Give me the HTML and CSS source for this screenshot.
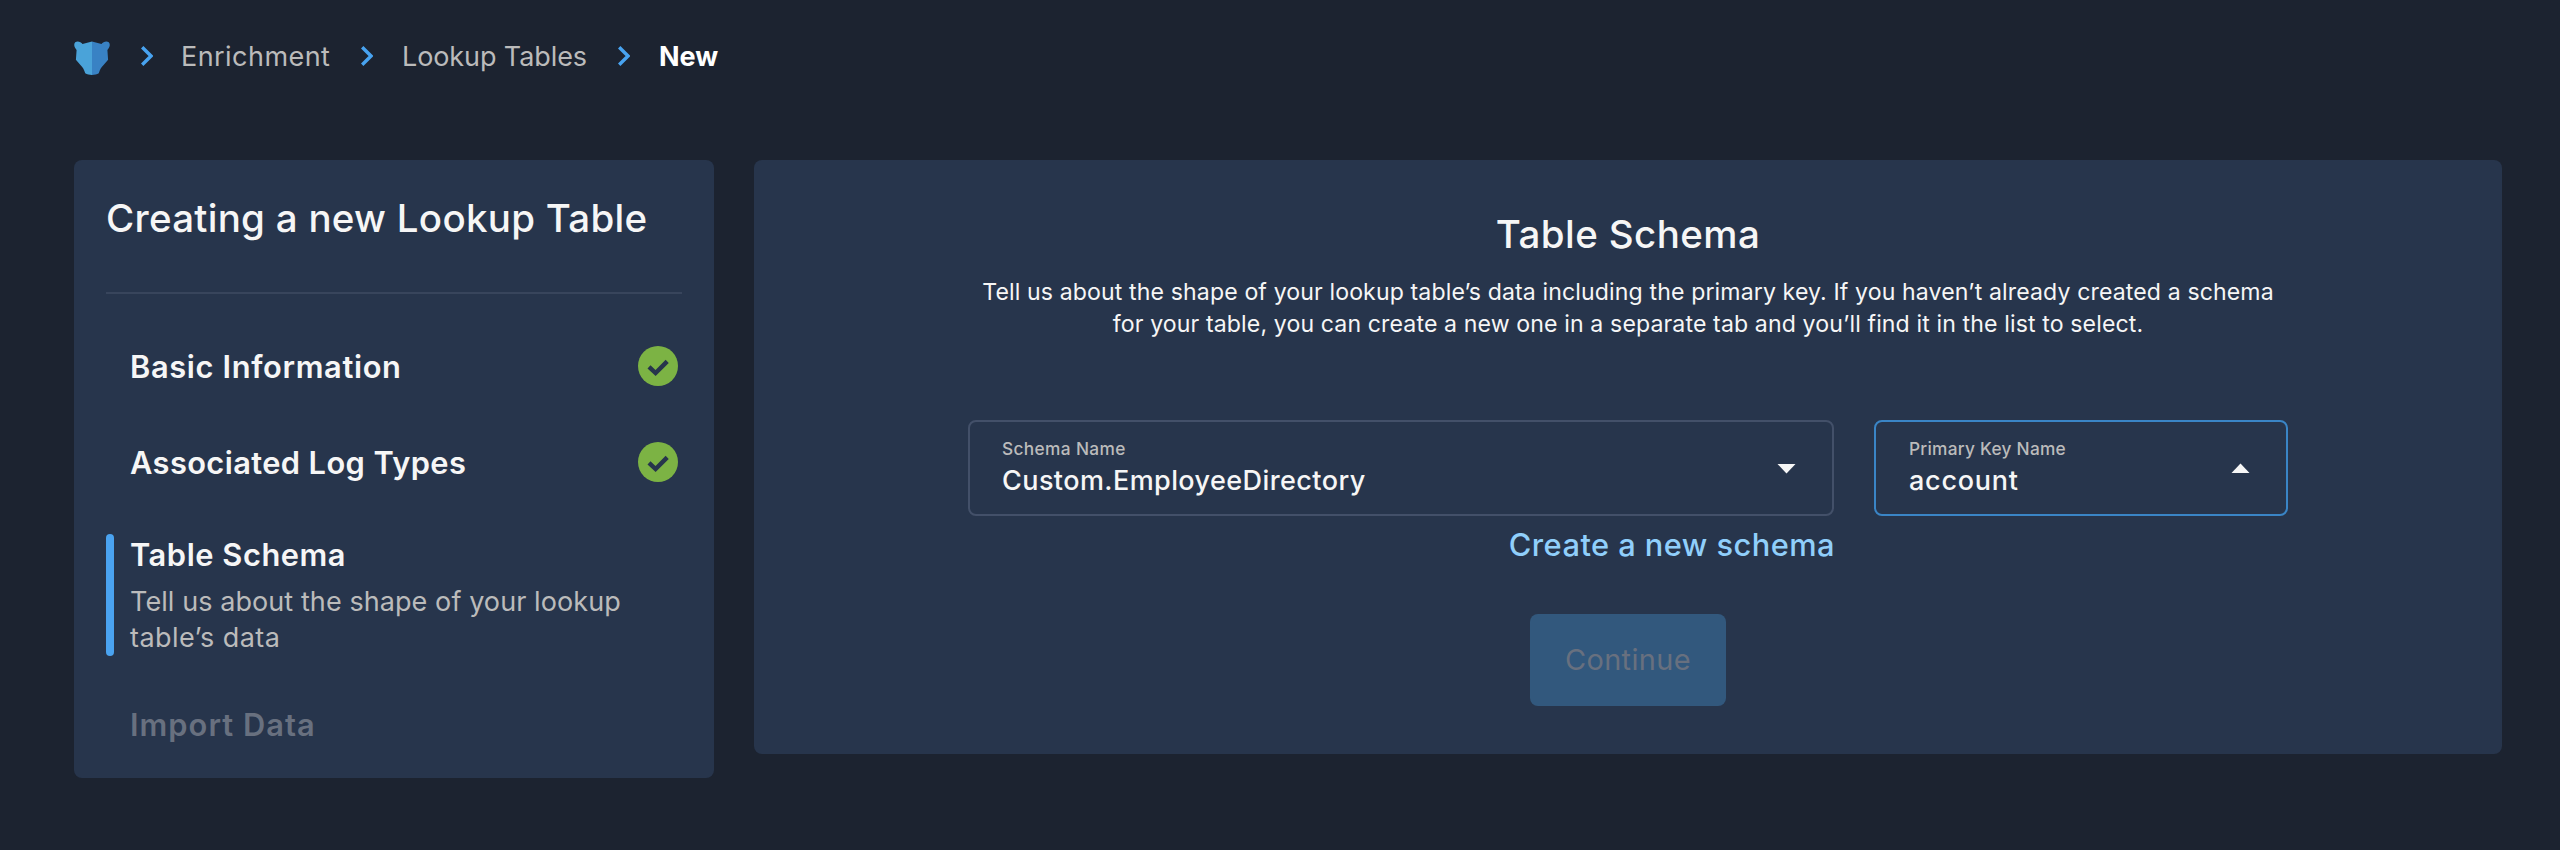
FILE: index.html
```html
<!DOCTYPE html>
<html lang="en">
<head>
<meta charset="utf-8">
<title>New Lookup Table</title>
<link rel="stylesheet" href="styles.css">
</head>
<body>
<nav class="breadcrumbs">
  <svg class="logo" width="36" height="34" viewBox="0 0 36 34">
    <path fill="#4aa3d9" d="M18 .4 L8.500 3 C7 .8 3.500-.3 1.200 1.200 C-.3 3 .1 5.300 1.200 7 L2.600 8.900 L1.900 18.800 L6.200 23.800 C8.500 25.800 10 28.500 11.200 32.200 C13 33.400 15.500 33.900 18 33.900Z"/>
    <path fill="#3982c4" d="M18 .4 L27.500 3 C29 .8 32.500-.3 34.800 1.200 C36.300 3 35.900 5.300 34.800 7 L33.400 8.900 L34.100 18.800 L29.800 23.800 C27.500 25.800 26 28.500 24.800 32.200 C23 33.400 20.500 33.900 18 33.900Z"/>
  </svg>
  <svg class="chevron chevron-first" width="12" height="20" viewBox="0 0 12 20"><path d="M1.200 1.200 10 10 1.200 18.800"/></svg>
  <a class="crumb crumb-section">Enrichment</a>
  <svg class="chevron" width="12" height="20" viewBox="0 0 12 20"><path d="M1.200 1.200 10 10 1.200 18.800"/></svg>
  <a class="crumb crumb-list">Lookup Tables</a>
  <svg class="chevron chevron-last" width="12" height="20" viewBox="0 0 12 20"><path d="M1.200 1.200 10 10 1.200 18.800"/></svg>
  <span class="crumb crumb-current">New</span>
</nav>
<main class="wizard">
  <aside class="card sidebar">
    <h1 class="sidebar-title">Creating a new Lookup Table</h1>
    <ol class="steps">
      <li class="step step-done">
        <span class="step-name step-basic">Basic Information</span>
        <svg class="check" width="40" height="40" viewBox="0 0 40 40"><circle cx="20" cy="20" r="20"/><path d="M11 20.800 17.600 27 29.200 15.400"/></svg>
      </li>
      <li class="step step-done step-second">
        <span class="step-name step-logs">Associated Log Types</span>
        <svg class="check" width="40" height="40" viewBox="0 0 40 40"><circle cx="20" cy="20" r="20"/><path d="M11 20.800 17.600 27 29.200 15.400"/></svg>
      </li>
      <li class="step-active">
        <span class="step-name">Table Schema</span>
        <p class="step-text">Tell us about the shape of your lookup<br><span class="step-text-end">table’s data</span></p>
      </li>
      <li class="step-pending"><span class="step-name step-import">Import Data</span></li>
    </ol>
  </aside>
  <section class="card panel">
    <h2 class="panel-title">Table Schema</h2>
    <p class="panel-text">Tell us about the shape of your lookup table’s data including the primary key. If you haven’t already created a schema<br>for your table, you can create a new one in a separate tab and you’ll find it in the list to select.</p>
    <div class="fields">
      <div class="schema-column">
        <div class="field">
          <div>
            <div class="field-label">Schema Name</div>
            <div class="field-value">Custom.EmployeeDirectory</div>
          </div>
          <svg class="caret" width="20" height="10" viewBox="0 0 20 10"><path d="M.5 0h18L9.500 9.500z"/></svg>
        </div>
        <a class="create-link">Create a new schema</a>
      </div>
      <div class="field field-focused">
        <div>
          <div class="field-label label-key">Primary Key Name</div>
          <div class="field-value value-key">account</div>
        </div>
        <svg class="caret caret-up" width="20" height="10" viewBox="0 0 20 10"><path d="M.5 10h18L9.500 .5z"/></svg>
      </div>
    </div>
    <button class="continue" disabled>Continue</button>
  </section>
</main>
</body>
</html>
```
FILE: styles.css
```css
* { box-sizing: border-box; }

body {
  margin: 0;
  padding: 36px 58px 0 74px;
  background: #1c2330;
  color: #f6f6f6;
  font-family: Inter, "Noto Sans", sans-serif;
  white-space: nowrap;
}

h1, h2, p, ol { margin: 0; padding: 0; }
ol { list-style: none; }
svg { display: block; flex: none; }

.breadcrumbs {
  display: flex;
  align-items: center;
  height: 40px;
}
.logo { margin-top: 4px; }
.chevron { margin: 0 29px 0 31px; }
.chevron-first { margin-right: 28px; }
.chevron path { fill: none; stroke: #48a3f0; stroke-width: 3.4; }
.crumb {
  padding-top: 1px;
  color: #bbb;
  font-size: 27px;
  line-height: 40px;
}
.crumb-section { width: 149px; letter-spacing: 0.45px; }
.crumb-list { width: 185px; letter-spacing: -0.1px; }
.crumb-current { color: #fff; font-weight: 700; }

.wizard {
  display: flex;
  align-items: flex-start;
  gap: 40px;
  margin-top: 84px;
}
.card {
  background: #27354c;
  border-radius: 8px;
}
.sidebar {
  width: 640px;
  height: 618px;
  padding: 33px 32px 0;
}
.sidebar-title {
  padding-bottom: 49px;
  border-bottom: 2px solid #38455c;
  font-size: 38.5px;
  font-weight: 500;
  line-height: 50px;
  letter-spacing: 0.27px;
}
.steps { padding-top: 52px; }
.step {
  display: flex;
  justify-content: space-between;
  height: 40px;
  padding: 0 4px 0 24px;
}
.step-second { margin-top: 56px; }
.step-name {
  display: block;
  font-size: 30.8px;
  font-weight: 600;
  line-height: 42px;
  letter-spacing: 0.55px;
}
.step-basic { letter-spacing: 0.65px; }
.step-logs { letter-spacing: 0.4px; }
.step-import { letter-spacing: 1.05px; }
.check circle { fill: #7cb344; }
.check path { fill: none; stroke: #27354c; stroke-width: 4.4; }
.step-active {
  position: relative;
  margin-top: 52px;
  padding-left: 24px;
}
.step-active::before {
  content: "";
  position: absolute;
  left: 0;
  top: 0;
  width: 8px;
  height: 100%;
  border-radius: 4px;
  background: #4aa3f0;
}
.step-text {
  margin-top: 8px;
  color: #bbb;
  font-size: 27px;
  line-height: 36px;
  letter-spacing: 0.08px;
}
.step-text-end { letter-spacing: 0.45px; }
.step-pending {
  margin-top: 48px;
  padding-left: 24px;
  color: #68707f;
}

.panel {
  display: flex;
  flex-direction: column;
  align-items: center;
  width: 1748px;
  height: 594px;
  padding-top: 49px;
}
.panel-title {
  font-size: 38.5px;
  font-weight: 500;
  line-height: 50px;
  letter-spacing: 0.4px;
}
.panel-text {
  margin-top: 17px;
  font-size: 23.1px;
  line-height: 32px;
  letter-spacing: 0.12px;
  text-align: center;
}
.fields {
  display: flex;
  align-items: flex-start;
  gap: 40px;
  margin-top: 80px;
}
.schema-column {
  display: flex;
  flex-direction: column;
  width: 866px;
}
.field {
  display: flex;
  justify-content: space-between;
  height: 96px;
  padding: 17px 35px 0 32px;
  border: 2px solid #435069;
  border-radius: 8px;
}
.field-focused {
  width: 414px;
  border-color: #3a85c6;
}
.field-label {
  color: #bbb;
  font-size: 17.3px;
  font-weight: 500;
  line-height: 20px;
  letter-spacing: 0.35px;
}
.label-key { padding-left: 1px; letter-spacing: 0.25px; }
.field-value {
  margin-top: 5px;
  font-size: 27px;
  font-weight: 500;
  line-height: 34px;
  letter-spacing: 0.42px;
}
.value-key { padding-left: 1px; letter-spacing: 0.75px; }
.caret { margin-top: 25px; fill: #f6f6f6; }
.caret-up { margin-top: 24px; }
.create-link {
  align-self: flex-end;
  margin: 9px -1px 0 0;
  color: #90cffb;
  font-size: 30.8px;
  font-weight: 500;
  line-height: 40px;
  letter-spacing: 0.45px;
}
.continue {
  width: 196px;
  height: 92px;
  margin-top: 49px;
  padding: 0;
  border: 0;
  border-radius: 8px;
  background: #32587d;
  color: #68707f;
  font: 400 28.9px/92px Inter, "Noto Sans", sans-serif;
  letter-spacing: 0.4px;
}
```
